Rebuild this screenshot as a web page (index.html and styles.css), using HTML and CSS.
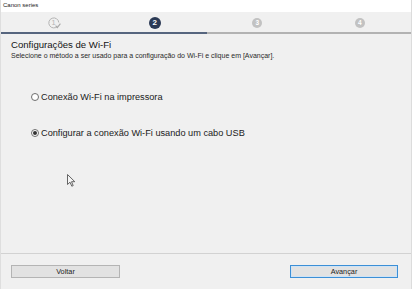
FILE: index.html
```html
<!DOCTYPE html>
<html lang="pt">
<head>
<meta charset="utf-8">
<title>Canon series</title>
<link rel="stylesheet" href="styles.css">
</head>
<body>
<div class="window">
  <div class="titlebar">Canon series</div>
  <div class="steps">
    <div class="step">
      <svg class="done" width="14" height="14" viewBox="0 0 14 14">
        <path d="M10.6 10.2 A5 5 0 1 1 11.8 6.5" fill="none" stroke="#b4b4b4" stroke-width="1"/>
        <path d="M8.6 9.6 L10.3 11.6 L13.4 7.6" fill="none" stroke="#a8a8a8" stroke-width="1.1"/>
        <text x="6.6" y="9.3" text-anchor="middle" font-family="Liberation Sans, Arial, sans-serif" font-size="7.5" fill="#b4b4b4">1</text>
      </svg>
    </div>
    <div class="step"><span class="num current">2</span></div>
    <div class="step"><span class="num todo">3</span></div>
    <div class="step"><span class="num todo">4</span></div>
  </div>
  <div class="track"><span class="track-done"></span><span class="track-todo"></span></div>
  <main class="content">
    <h1 class="heading">Configurações de Wi-Fi</h1>
    <p class="sub">Selecione o método a ser usado para a configuração do Wi-Fi e clique em [Avançar].</p>
    <div class="options">
      <label class="option"><span class="radio"></span>Conexão Wi-Fi na impressora</label>
      <label class="option"><span class="radio checked"></span>Configurar a conexão Wi-Fi usando um cabo USB</label>
    </div>
    <svg class="cursor" width="9" height="13" viewBox="0 0 9 13">
      <path d="M0.5 0.5 L0.5 10.5 L3 8.2 L4.8 12.2 L6.2 11.6 L4.5 7.7 L7.8 7.7 Z" fill="#f4f4f4" stroke="#555" stroke-width="0.9" stroke-linejoin="round"/>
    </svg>
  </main>
  <footer class="footer">
    <button class="btn">Voltar</button>
    <button class="btn primary">Avançar</button>
  </footer>
</div>
</body>
</html>
```
FILE: styles.css
```css
* { box-sizing: border-box; }
html, body {
  margin: 0;
  padding: 0;
  background: #f0f0f0;
}
body {
  font-family: "Liberation Sans", Arial, sans-serif;
  color: #1e1e1e;
}
.window {
  width: 412px;
  height: 289px;
  display: flex;
  flex-direction: column;
  border-right: 1px solid #dcdcdc;
  border-left: 1px solid #dedede;
  position: relative;
}
.titlebar {
  height: 12px;
  background: #ffffff;
  font-size: 6px;
  line-height: 11px;
  padding-left: 2px;
  color: #222;
}
.steps {
  height: 20px;
  display: grid;
  grid-template-columns: repeat(4, 1fr);
  align-items: center;
  justify-items: center;
  padding-top: 1px;
}
.step { display: flex; align-items: center; justify-content: center; }
.done { display: block; margin-left: 3px; }
.num {
  display: flex;
  align-items: center;
  justify-content: center;
  border-radius: 50%;
  color: #fff;
  font-weight: bold;
}
.num.current {
  width: 12px;
  height: 12px;
  background: #2b3a55;
  font-size: 8px;
}
.num.todo {
  width: 10px;
  height: 10px;
  background: #c2c2c2;
  font-size: 6.5px;
}
.track {
  display: flex;
  height: 2px;
}
.track-done { width: 206px; background: #56657e; }
.track-todo { flex: 1; background: #b2b2b2; }
.content {
  flex: 1;
  padding: 0 10px;
  position: relative;
}
.heading {
  margin: 5px 0 0;
  font-size: 9.6px;
  line-height: 12px;
  font-weight: normal;
  color: #141414;
}
.sub {
  margin: 0;
  font-size: 7px;
  line-height: 9px;
  color: #2a2a2a;
}
.options {
  display: flex;
  flex-direction: column;
  gap: 24px;
  margin-top: 31px;
  padding-left: 20px;
}
.option {
  display: flex;
  align-items: center;
  gap: 2px;
  font-size: 9.2px;
  line-height: 12px;
  color: #1a1a1a;
}
.radio {
  width: 8px;
  height: 8px;
  border-radius: 50%;
  border: 1px solid #6e6e6e;
  background: #fff;
  display: flex;
  align-items: center;
  justify-content: center;
}
.radio.checked::after {
  content: "";
  width: 4px;
  height: 4px;
  border-radius: 50%;
  background: #333;
}
.cursor {
  position: absolute;
  left: 66px;
  top: 140px;
}
.footer {
  height: 36px;
  border-top: 1px solid #d2d2d2;
  display: flex;
  justify-content: space-between;
  align-items: flex-start;
  padding: 11px 13px 0 10px;
}
.btn {
  width: 109px;
  height: 13px;
  padding: 0;
  border: 1px solid #b4b4b4;
  background: #e2e2e2;
  font-family: "Liberation Sans", Arial, sans-serif;
  font-size: 7.3px;
  line-height: 11px;
  color: #222;
}
.btn.primary {
  width: 108px;
  border: 1px solid #3c8fd6;
  box-shadow: inset 0 0 0 1px #cfe3f5;
}
```
